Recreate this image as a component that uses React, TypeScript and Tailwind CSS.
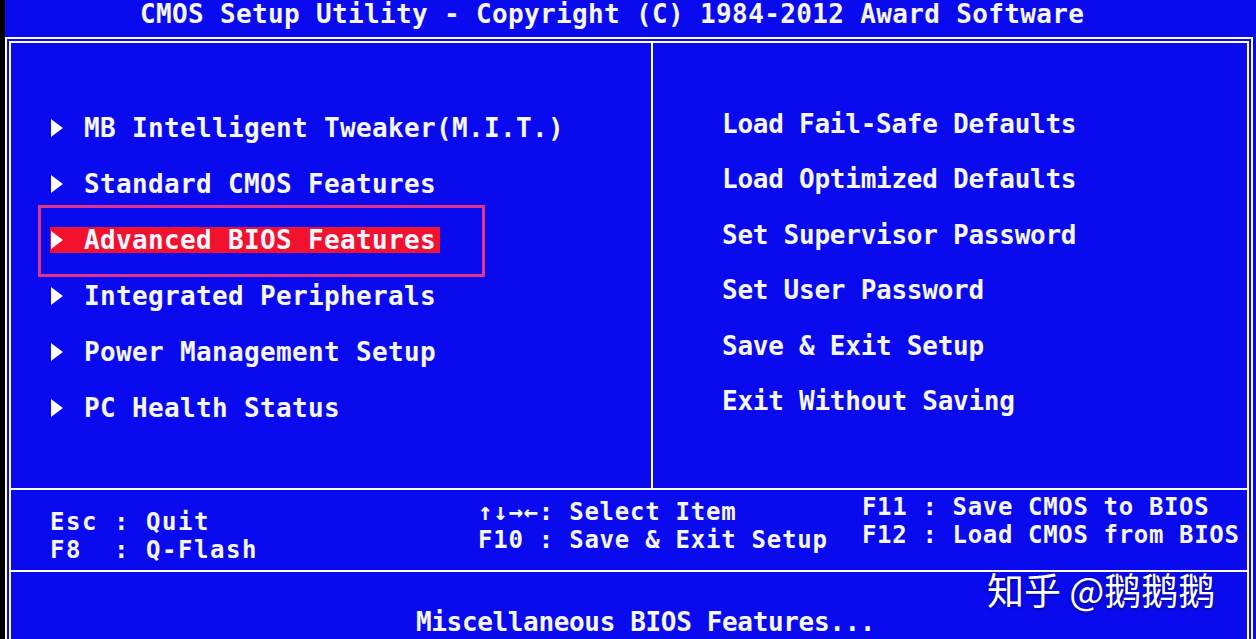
import React from 'react';

const mainMenu = [
  'MB Intelligent Tweaker(M.I.T.)',
  'Standard CMOS Features',
  'Advanced BIOS Features',
  'Integrated Peripherals',
  'Power Management Setup',
  'PC Health Status',
];

const actions = [
  'Load Fail-Safe Defaults',
  'Load Optimized Defaults',
  'Set Supervisor Password',
  'Set User Password',
  'Save & Exit Setup',
  'Exit Without Saving',
];

const SELECTED = 2;

function Pointer() {
  return (
    <svg width="14" height="20" viewBox="0 0 14 20" className="shrink-0">
      <polygon points="1,1 13,10 1,19" fill="#fff" />
    </svg>
  );
}

export default function App() {
  return (
    <div className="w-[1256px] h-[639px] overflow-hidden bg-[#0a0aee] flex font-['DejaVu_Sans_Mono',monospace] font-bold text-[26px] leading-[26px] text-[#f6f6ff] whitespace-pre relative">
      <div className="w-[5px] shrink-0 bg-black" />

      <div className="flex-1 flex flex-col">
        <header className="h-[37px] shrink-0 pl-[135px] leading-[28px] tracking-[0.35px]">
          CMOS Setup Utility - Copyright (C) 1984-2012 Award Software
        </header>

        <main className="w-[1248px] flex-1 flex flex-col border-[6px] border-b-0 border-double border-white">
          {/* menu panes */}
          <section className="h-[445px] shrink-0 flex">
            <div className="w-[640px] relative pt-[57px] pl-[39px] flex flex-col tracking-[0.35px]">
              {mainMenu.map((item, i) => (
                <div key={item} className="h-14 flex items-center">
                  {i === SELECTED ? (
                    <div className="h-[26px] pr-1 flex items-center gap-5 bg-[#f2122e]">
                      <Pointer />
                      <span>{item}</span>
                    </div>
                  ) : (
                    <div className="flex items-center gap-5">
                      <Pointer />
                      <span>{item}</span>
                    </div>
                  )}
                </div>
              ))}
              <div className="absolute left-[27px] top-[162px] w-[447px] h-[72px] border-[3px] border-[#e2338a]" />
            </div>

            <div className="w-[2px] bg-white" />

            <div className="flex-1 pt-[53px] pl-[69px] flex flex-col tracking-[-0.25px]">
              {actions.map((item) => (
                <div key={item} className="h-[55.5px] flex items-center">
                  {item}
                </div>
              ))}
            </div>
          </section>

          <div className="h-[2px] shrink-0 bg-white" />

          {/* key help */}
          <section className="h-[80px] shrink-0 flex text-[24px] leading-[28px]">
            <div className="w-[467px] pl-[39px] pt-[18px] flex flex-col tracking-[1.55px]">
              <span>Esc : Quit</span>
              <span>F8  : Q-Flash</span>
            </div>
            <div className="w-[384px] pt-[8px] flex flex-col tracking-[0.75px]">
              <span>↑↓→←: Select Item</span>
              <span>F10 : Save & Exit Setup</span>
            </div>
            <div className="flex-1 pt-[3px] flex flex-col tracking-[0.65px]">
              <span>F11 : Save CMOS to BIOS</span>
              <span>F12 : Load CMOS from BIOS</span>
            </div>
          </section>

          <div className="h-[2px] shrink-0 bg-white" />

          <footer className="flex-1 pl-[405px] pt-[37px] tracking-[-0.35px]">
            Miscellaneous BIOS Features...
          </footer>
        </main>
      </div>

      <div className="absolute left-[987px] top-[568px] font-['Noto_Sans_CJK_SC',sans-serif] font-normal text-[37px] leading-[42px] tracking-normal text-white [text-shadow:0_1px_3px_rgba(0,0,40,0.6)]">
        知乎 @鹅鹅鹅
      </div>
    </div>
  );
}
